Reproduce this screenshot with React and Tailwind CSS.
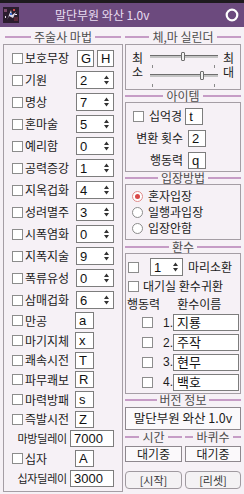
import React from "react";

const spinRows = [
  ["기원", "2"],
  ["명상", "7"],
  ["혼마술", "5"],
  ["예리함", "0"],
  ["공력증강", "1"],
  ["지옥겁화", "4"],
  ["성려멸주", "3"],
  ["시폭염화", "0"],
  ["지폭지술", "9"],
  ["폭류유성", "0"],
  ["삼매겁화", "6"],
];

const keyRows = [
  ["만공", "a"],
  ["마기지체", "x"],
  ["쾌속시전", "T"],
  ["파무쾌보", "R"],
  ["마력방패", "s"],
  ["즉발시전", "Z"],
];

const pets = ["지룡", "주작", "현무", "백호"];

function Check() {
  return <span className="block h-[11px] w-[11px] shrink-0 border border-[#8c8c8c] bg-white" />;
}

function Radio({ on }) {
  if (on) {
    return (
      <span className="flex h-[11px] w-[11px] shrink-0 items-center justify-center rounded-full border border-[#e08a8a] bg-white">
        <span className="h-[5px] w-[5px] rounded-full bg-[#d94848]" />
      </span>
    );
  }
  return <span className="block h-[11px] w-[11px] shrink-0 rounded-full border border-[#8c8c8c] bg-white" />;
}

function Field({ v, cls }) {
  return (
    <div className={`flex h-[17px] shrink-0 items-center border border-[#7d7d7d] bg-white pl-[3px] font-['Liberation_Sans','Noto_Sans_CJK_KR',sans-serif] text-[13px] leading-none text-[#111] ${cls}`}>
      {v}
    </div>
  );
}

function Arrows() {
  return (
    <svg width="5" height="10" viewBox="0 0 5 10">
      <path d="M2.5 0.5L5 4H0z M0 6h5L2.5 9.5z" fill="#333" />
    </svg>
  );
}

function Spin({ v, cls }) {
  return (
    <div className={`flex h-[18px] shrink-0 items-center justify-between border border-[#7d7d7d] bg-white pl-[3px] pr-[4px] font-['Liberation_Sans',sans-serif] text-[13px] leading-none text-[#111] ${cls}`}>
      <span>{v}</span>
      <Arrows />
    </div>
  );
}

function Head({ title, cls }) {
  return (
    <div className={`flex items-center ${cls}`}>
      <div className="h-[2px] flex-1 bg-[#c69cc6]" />
      <span className="px-[3px] text-[12px] leading-none text-[#4d4d4d]">{title}</span>
      <div className="h-[2px] flex-1 bg-[#c69cc6]" />
    </div>
  );
}

function Slider({ thumb }) {
  return (
    <div className="relative h-[20px] w-[68px]">
      <div className="absolute left-0 right-0 top-[3px] h-[3px] border-t border-[#6e6e6e] bg-[#c4c4c4]" />
      <div className={`absolute top-0 h-[9px] w-[4px] rounded-[1px] border border-[#6e6e6e] bg-[#f2f2f2] ${thumb}`} />
      <div className="absolute left-[2px] top-[13px] h-[3px] w-px bg-[#8a8a8a]" />
      <div className="absolute right-[3px] top-[13px] h-[3px] w-px bg-[#8a8a8a]" />
    </div>
  );
}

function TitleIcon() {
  return (
    <svg width="16" height="16" viewBox="0 0 16 16">
      <rect width="16" height="16" fill="#2b1d2e" />
      <rect x="1" y="2" width="3" height="3" fill="#7a4a6a" />
      <rect x="11" y="10" width="4" height="4" fill="#5a2a3a" />
      <path d="M4 13L8 3L9 8L13 5L10 11L6 9z" fill="#dcd6e6" />
      <rect x="7" y="6" width="2" height="2" fill="#3a6ad0" />
      <rect x="10" y="2" width="2" height="2" fill="#c84848" />
      <rect x="2" y="9" width="1" height="2" fill="#e8e0f0" />
      <rect x="12" y="7" width="2" height="1" fill="#f0e8ff" />
    </svg>
  );
}

export default function App() {
  return (
    <div className="h-[494px] w-[244px] overflow-hidden whitespace-nowrap bg-[#f6f1f6] font-['Noto_Sans_CJK_KR',sans-serif] text-[12px] leading-none text-[#1c1c1c]">
      {/* title bar */}
      <div className="h-[3px] bg-[#1e1a1e]" />
      <div className="flex h-[24px] items-center bg-[#6c4a7e] pl-[3px] pr-[5px]">
        <TitleIcon />
        <span className="ml-[36px] text-[12px] text-[#e9dcf0]">말단부원 와산 1.0v</span>
        <svg className="ml-auto" width="14" height="14" viewBox="0 0 14 14">
          <circle cx="7" cy="7" r="5.3" fill="none" stroke="#ffffff" strokeWidth="2.2" />
        </svg>
      </div>

      <div className="flex gap-[2px] pl-[3px] pt-[3px]">
        {/* left: spells */}
        <div className="w-[120px]">
          <Head title="주술사 마법" cls="h-[14px] px-[2px]" />
          <div className="flex h-[448px] flex-col border border-[#a59ea5] pl-[8px] pr-[8px] pt-[2px]">
            <div className="flex h-[22px] items-center">
              <Check />
              <span className="ml-[2px]">보호무장</span>
              <div className="ml-auto flex gap-[3px]">
                <Field v="G" cls="w-[17px]" />
                <Field v="H" cls="w-[17px]" />
              </div>
            </div>
            {spinRows.map(([label, v]) => (
              <div key={label} className="flex h-[22px] items-center">
                <Check />
                <span className="ml-[2px]">{label}</span>
                <Spin v={v} cls="ml-auto w-[38px]" />
              </div>
            ))}
            {keyRows.map(([label, v]) => (
              <div key={label} className="flex h-[19.7px] items-center">
                <Check />
                <span className="ml-[2px]">{label}</span>
                <Field v={v} cls="ml-auto mr-[20px] w-[19px]" />
              </div>
            ))}
            <div className="-ml-[3px] flex h-[19.7px] items-center justify-end gap-[3px]">
              <span className="text-[11px] tracking-[-0.2px]">마방딜레이</span>
              <Field v="7000" cls="w-[44px]" />
            </div>
            <div className="flex h-[19.7px] items-center">
              <Check />
              <span className="ml-[2px]">십자</span>
              <Field v="A" cls="ml-auto mr-[20px] w-[19px]" />
            </div>
            <div className="-ml-[3px] flex h-[19.7px] items-center justify-end gap-[3px]">
              <span className="text-[11px] tracking-[-0.2px]">십자딜레이</span>
              <Field v="3000" cls="w-[44px]" />
            </div>
          </div>
        </div>

        {/* right */}
        <div className="w-[116px]">
          <Head title="체,마 실린더" cls="h-[14px]" />
          <div className="flex h-[46px] border border-[#a59ea5] pl-[6px] pt-[6px]">
            <div className="flex w-[12px] flex-col leading-[14px]">
              <span className="h-[14px]">최</span>
              <span className="h-[14px]">소</span>
            </div>
            <div className="ml-[6px] flex flex-col pt-[1px]">
              <Slider thumb="left-[31px]" />
              <Slider thumb="left-[50px]" />
            </div>
            <div className="ml-[5px] flex w-[12px] flex-col leading-[14px]">
              <span className="h-[14px]">최</span>
              <span className="h-[14px]">대</span>
            </div>
          </div>

          <Head title="아이템" cls="h-[12px]" />
          <div className="flex h-[70px] flex-col gap-[4px] border border-[#a59ea5] pt-[4px]">
            <div className="flex h-[18px] items-center pl-[7px]">
              <Check />
              <span className="ml-[5px]">십억경</span>
              <Field v="t" cls="ml-[3px] w-[18px]" />
            </div>
            <div className="flex h-[18px] items-center">
              <span className="w-[57px] text-right">변환 횟수</span>
              <Field v="2" cls="ml-[5px] w-[18px]" />
            </div>
            <div className="flex h-[18px] items-center">
              <span className="w-[57px] text-right">행동력</span>
              <Field v="q" cls="ml-[5px] w-[18px]" />
            </div>
          </div>

          <Head title="입장방법" cls="h-[12px]" />
          <div className="flex h-[56px] flex-col border border-[#a59ea5] pl-[6px] pt-[3px]">
            {[["혼자입장", true], ["일행과입장", false], ["입장안함", false]].map(([t, on]) => (
              <div key={t} className="flex h-[16px] items-center">
                <Radio on={on} />
                <span className="ml-[5px]">{t}</span>
              </div>
            ))}
          </div>

          <Head title="환수" cls="mt-[1px] h-[12px]" />
          <div className="flex h-[141px] flex-col border border-[#a59ea5] pt-[3px]">
            <div className="flex h-[20px] items-center pl-[2px]">
              <Check />
              <Spin v="1" cls="ml-[11px] w-[33px]" />
              <span className="ml-[5px]">마리소환</span>
            </div>
            <div className="flex h-[18px] items-center pl-[2px]">
              <Check />
              <span className="ml-[4px]">대기실 환수귀환</span>
            </div>
            <div className="flex h-[18px] items-center pl-[1px]">
              <span>행동력</span>
              <span className="ml-[17px]">환수이름</span>
            </div>
            {pets.map((p, i) => (
              <div key={p} className="flex h-[19.8px] items-center pl-[16px]">
                <Check />
                <span className="ml-[10px] w-[10px] font-['Liberation_Sans',sans-serif] text-[12px]">{i + 1}.</span>
                <Field v={p} cls="w-[66px] text-[12.5px]" />
              </div>
            ))}
          </div>

          <Head title="버전 정보" cls="h-[12px]" />
          <div className="mt-[1px] flex h-[23px] items-center justify-center border border-[#8e888e] bg-[#fbf9fb] text-[12.5px]">
            말단부원 와산 1.0v
          </div>

          <div className="flex gap-[3px]">
            <div className="w-[57px]">
              <Head title="시간" cls="h-[14px]" />
              <div className="mt-[2px] flex h-[16px] items-center justify-center border border-[#8e888e] bg-[#fbf9fb]">대기중</div>
              <button className="mt-[9px] flex h-[18px] w-full items-center justify-center rounded-[4px] border border-[#a09aa0] bg-[#f4f2f4] text-[11px] text-[#333]">
                [시작]
              </button>
            </div>
            <div className="w-[56px]">
              <Head title="바퀴수" cls="h-[14px]" />
              <div className="mt-[2px] flex h-[16px] items-center justify-center border border-[#8e888e] bg-[#fbf9fb]">대기중</div>
              <button className="mt-[9px] flex h-[18px] w-full items-center justify-center rounded-[4px] border border-[#a09aa0] bg-[#f4f2f4] text-[11px] text-[#333]">
                [리셋]
              </button>
            </div>
          </div>
        </div>
      </div>
    </div>
  );
}
